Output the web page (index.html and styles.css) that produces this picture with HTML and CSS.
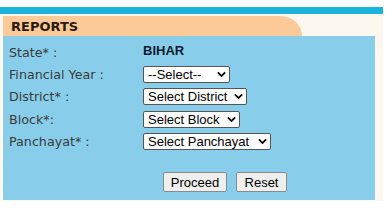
FILE: index.html
```html
<!DOCTYPE html>
<html lang="en">
<head>
    <meta charset="UTF-8">
    <title>Reports</title>
    <link rel="stylesheet" href="styles.css">
</head>
<body>
    <div class="topbar"></div>
    <div class="page">
        <div class="tab">REPORTS</div>
        <div class="panel">
            <div class="row">
                <label>State* :</label>
                <span class="state">BIHAR</span>
            </div>
            <div class="row">
                <label for="fy">Financial Year :</label>
                <div class="select-wrap">
                    <select id="fy" class="w-fy"><option>--Select--</option></select>
                    <svg class="chev" viewBox="0 0 10 7" width="9" height="7"><path d="M1 1.2 L5 5.2 L9 1.2" fill="none" stroke="#000" stroke-width="2"/></svg>
                </div>
            </div>
            <div class="row">
                <label for="district">District* :</label>
                <div class="select-wrap">
                    <select id="district" class="w-district"><option>Select District</option></select>
                    <svg class="chev" viewBox="0 0 10 7" width="9" height="7"><path d="M1 1.2 L5 5.2 L9 1.2" fill="none" stroke="#000" stroke-width="2"/></svg>
                </div>
            </div>
            <div class="row">
                <label for="block">Block*:</label>
                <div class="select-wrap">
                    <select id="block" class="w-block"><option>Select Block</option></select>
                    <svg class="chev" viewBox="0 0 10 7" width="9" height="7"><path d="M1 1.2 L5 5.2 L9 1.2" fill="none" stroke="#000" stroke-width="2"/></svg>
                </div>
            </div>
            <div class="row">
                <label for="panchayat">Panchayat* :</label>
                <div class="select-wrap">
                    <select id="panchayat" class="w-panchayat"><option>Select Panchayat</option></select>
                    <svg class="chev" viewBox="0 0 10 7" width="9" height="7"><path d="M1 1.2 L5 5.2 L9 1.2" fill="none" stroke="#000" stroke-width="2"/></svg>
                </div>
            </div>
            <div class="actions">
                <button class="btn-proceed">Proceed</button>
                <button class="btn-reset">Reset</button>
            </div>
        </div>
    </div>
</body>
</html>
```

FILE: styles.css
```css
body {
    margin: 0;
    padding: 0;
    background: #fff;
    font-family: "DejaVu Sans", Verdana, sans-serif;
}
.topbar {
    margin-top: 7px;
    width: 383px;
    height: 7px;
    background: #19b5de;
}
.page {
    width: 380px;
    padding: 2px 0 0 3px;
    background: #fdf8ef;
    height: 185px;
}
.tab {
    width: 291px;
    height: 20px;
    padding-left: 8px;
    background: #fcc998;
    border-top-right-radius: 22px 20px;
    font-size: 13px;
    font-weight: bold;
    color: #2a1a10;
    line-height: 21px;
}
.panel {
    width: 372px;
    height: 164px;
    background: #88ceea;
    box-sizing: border-box;
    padding: 5px 0 0 6px;
}
.row {
    display: flex;
    align-items: center;
    height: 22.3px;
}
.row label {
    width: 134px;
    font-size: 12.7px;
    color: #3a3a3a;
}
.state {
    font-family: "Liberation Sans", Arial, sans-serif;
    font-weight: bold;
    font-size: 13px;
    color: #0e1a2e;
    margin-top: -4px;
}
.select-wrap {
    position: relative;
    display: inline-block;
}
select {
    appearance: none;
    -webkit-appearance: none;
    height: 17px;
    box-sizing: border-box;
    padding: 0 0 0 4px;
    border: 1px solid #555;
    border-radius: 2px;
    background: #fff;
    font-family: "Liberation Sans", Arial, sans-serif;
    font-size: 13px;
    color: #000;
    display: block;
}
.w-fy { width: 87px; }
.w-district { width: 104px; }
.w-block { width: 97px; }
.w-panchayat { width: 128px; }
.chev {
    position: absolute;
    right: 4px;
    top: 5px;
}
.actions {
    display: flex;
    gap: 9px;
    padding: 20px 0 0 154px;
}
button {
    height: 20px;
    padding: 0;
    border: 1px solid #8a8a8a;
    border-radius: 2px;
    background: #efefef;
    font-family: "Liberation Sans", Arial, sans-serif;
    font-size: 13px;
    color: #000;
}
.btn-proceed { width: 64px; }
.btn-reset { width: 51px; }
```
